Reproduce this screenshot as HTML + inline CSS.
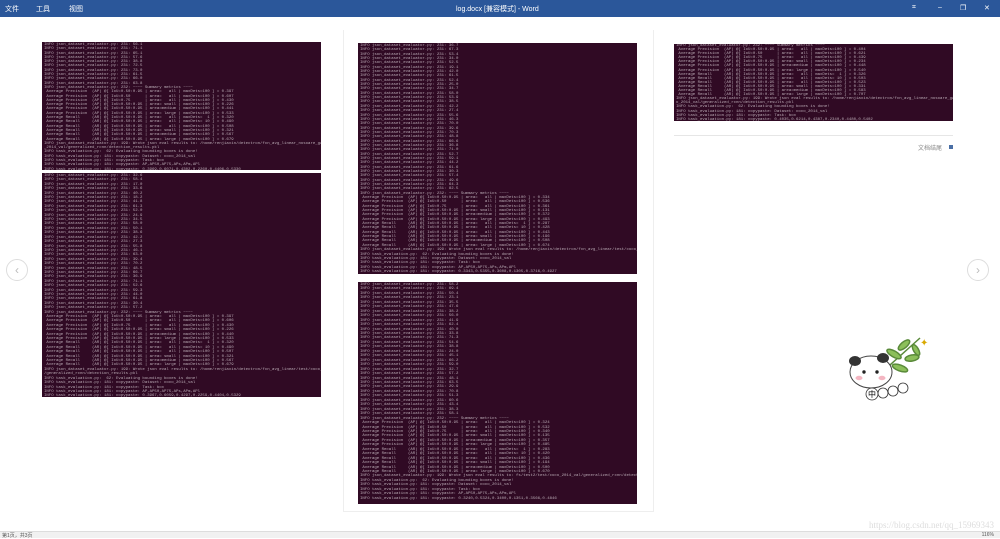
<!DOCTYPE html>
<html><head><meta charset="utf-8"><style>
*{margin:0;padding:0;box-sizing:border-box}
body{width:1000px;height:538px;background:#fff;position:relative;overflow:hidden;font-family:"Liberation Sans","Noto Sans CJK SC",sans-serif}
.tb{position:absolute;left:0;top:0;width:1000px;height:17px;background:#2b579a;color:#fff;font-size:7px}
.tb span{position:absolute;top:4px}
.term{position:absolute;background:#300a24;color:#b9aab4;font-family:"Liberation Mono",monospace;font-size:4px;line-height:4.2px;white-space:pre;overflow:hidden;padding:1px 2px}
.pg{position:absolute;border:1px solid #eee}
.circ{position:absolute;width:22px;height:22px;border:1px solid #ddd;border-radius:50%;color:#bbb;font-size:12px;text-align:center;line-height:20px}
.sb{position:absolute;left:0;top:531px;width:1000px;height:7px;background:#f1f1f1;border-top:1px solid #ddd;font-size:5px;color:#555}
</style></head><body>
<div class="tb"><span style="left:5px">文件</span><span style="left:36px">工具</span><span style="left:69px">视图</span><span style="left:456px">log.docx [兼容模式] - Word</span><span style="left:912px">⌗</span><span style="left:938px">–</span><span style="left:960px">❐</span><span style="left:984px">✕</span></div>
<div class="pg" style="left:343px;top:30px;width:311px;height:482px;border-top:none"></div>
<div class="circ" style="left:6px;top:259px">‹</div>
<div class="circ" style="left:967px;top:259px">›</div>
<div class="circ" style="left:305px;top:280px;width:12px;height:12px;line-height:10px;font-size:8px">›</div>

<div class="term" style="left:42px;top:42px;width:279px;height:128px;line-height:4.3px">INFO json_dataset_evaluator.py: 231: 56.1
INFO json_dataset_evaluator.py: 231: 71.1
INFO json_dataset_evaluator.py: 231: 65.1
INFO json_dataset_evaluator.py: 231: 57.6
INFO json_dataset_evaluator.py: 231: 38.8
INFO json_dataset_evaluator.py: 231: 72.5
INFO json_dataset_evaluator.py: 231: 73.0
INFO json_dataset_evaluator.py: 231: 61.5
INFO json_dataset_evaluator.py: 231: 66.0
INFO json_dataset_evaluator.py: 231: 63.8
INFO json_dataset_evaluator.py: 232: ~~~~ Summary metrics ~~~~
 Average Precision  (AP) @[ IoU=0.50:0.95 | area=   all | maxDets=100 ] = 0.397
 Average Precision  (AP) @[ IoU=0.50      | area=   all | maxDets=100 ] = 0.607
 Average Precision  (AP) @[ IoU=0.75      | area=   all | maxDets=100 ] = 0.430
 Average Precision  (AP) @[ IoU=0.50:0.95 | area= small | maxDets=100 ] = 0.226
 Average Precision  (AP) @[ IoU=0.50:0.95 | area=medium | maxDets=100 ] = 0.441
 Average Precision  (AP) @[ IoU=0.50:0.95 | area= large | maxDets=100 ] = 0.533
 Average Recall     (AR) @[ IoU=0.50:0.95 | area=   all | maxDets=  1 ] = 0.320
 Average Recall     (AR) @[ IoU=0.50:0.95 | area=   all | maxDets= 10 ] = 0.490
 Average Recall     (AR) @[ IoU=0.50:0.95 | area=   all | maxDets=100 ] = 0.508
 Average Recall     (AR) @[ IoU=0.50:0.95 | area= small | maxDets=100 ] = 0.321
 Average Recall     (AR) @[ IoU=0.50:0.95 | area=medium | maxDets=100 ] = 0.567
 Average Recall     (AR) @[ IoU=0.50:0.95 | area= large | maxDets=100 ] = 0.679
INFO json_dataset_evaluator.py: 199: Wrote json eval results to: /home/renjiaxin/detectron/fcn_avg_linear_nosoare_gaussian/test/coco
_2014_val/generalized_rcnn/detection_results.pkl
INFO task_evaluation.py:  62: Evaluating bounding boxes is done!
INFO task_evaluation.py: 181: copypaste: Dataset: coco_2014_val
INFO task_evaluation.py: 181: copypaste: Task: box
INFO task_evaluation.py: 181: copypaste: AP,AP50,AP75,APs,APm,APl
INFO task_evaluation.py: 181: copypaste: 0.3969,0.6071,0.4302,0.2260,0.4406,0.5330</div>

<div class="term" style="left:42px;top:173px;width:279px;height:224px;line-height:4.4px">INFO json_dataset_evaluator.py: 231: 32.6
INFO json_dataset_evaluator.py: 231: 58.4
INFO json_dataset_evaluator.py: 231: 17.0
INFO json_dataset_evaluator.py: 231: 33.6
INFO json_dataset_evaluator.py: 231: 40.2
INFO json_dataset_evaluator.py: 231: 18.2
INFO json_dataset_evaluator.py: 231: 41.8
INFO json_dataset_evaluator.py: 231: 61.3
INFO json_dataset_evaluator.py: 231: 52.0
INFO json_dataset_evaluator.py: 231: 24.9
INFO json_dataset_evaluator.py: 231: 34.5
INFO json_dataset_evaluator.py: 231: 58.0
INFO json_dataset_evaluator.py: 231: 50.1
INFO json_dataset_evaluator.py: 231: 38.6
INFO json_dataset_evaluator.py: 231: 42.2
INFO json_dataset_evaluator.py: 231: 27.3
INFO json_dataset_evaluator.py: 231: 55.8
INFO json_dataset_evaluator.py: 231: 46.1
INFO json_dataset_evaluator.py: 231: 63.0
INFO json_dataset_evaluator.py: 231: 39.4
INFO json_dataset_evaluator.py: 231: 70.2
INFO json_dataset_evaluator.py: 231: 48.5
INFO json_dataset_evaluator.py: 231: 66.7
INFO json_dataset_evaluator.py: 231: 36.9
INFO json_dataset_evaluator.py: 231: 71.1
INFO json_dataset_evaluator.py: 231: 52.6
INFO json_dataset_evaluator.py: 231: 59.3
INFO json_dataset_evaluator.py: 231: 44.0
INFO json_dataset_evaluator.py: 231: 61.8
INFO json_dataset_evaluator.py: 231: 30.4
INFO json_dataset_evaluator.py: 231: 57.2
INFO json_dataset_evaluator.py: 232: ~~~~ Summary metrics ~~~~
 Average Precision  (AP) @[ IoU=0.50:0.95 | area=   all | maxDets=100 ] = 0.397
 Average Precision  (AP) @[ IoU=0.50      | area=   all | maxDets=100 ] = 0.606
 Average Precision  (AP) @[ IoU=0.75      | area=   all | maxDets=100 ] = 0.430
 Average Precision  (AP) @[ IoU=0.50:0.95 | area= small | maxDets=100 ] = 0.226
 Average Precision  (AP) @[ IoU=0.50:0.95 | area=medium | maxDets=100 ] = 0.440
 Average Precision  (AP) @[ IoU=0.50:0.95 | area= large | maxDets=100 ] = 0.533
 Average Recall     (AR) @[ IoU=0.50:0.95 | area=   all | maxDets=  1 ] = 0.320
 Average Recall     (AR) @[ IoU=0.50:0.95 | area=   all | maxDets= 10 ] = 0.490
 Average Recall     (AR) @[ IoU=0.50:0.95 | area=   all | maxDets=100 ] = 0.507
 Average Recall     (AR) @[ IoU=0.50:0.95 | area= small | maxDets=100 ] = 0.321
 Average Recall     (AR) @[ IoU=0.50:0.95 | area=medium | maxDets=100 ] = 0.567
 Average Recall     (AR) @[ IoU=0.50:0.95 | area= large | maxDets=100 ] = 0.679
INFO json_dataset_evaluator.py: 199: Wrote json eval results to: /home/renjiaxin/detectron/fcn_avg_linear/test/coco_2014_val
/generalized_rcnn/detection_results.pkl
INFO task_evaluation.py:  62: Evaluating bounding boxes is done!
INFO task_evaluation.py: 181: copypaste: Dataset: coco_2014_val
INFO task_evaluation.py: 181: copypaste: Task: box
INFO task_evaluation.py: 181: copypaste: AP,AP50,AP75,APs,APm,APl
INFO task_evaluation.py: 181: copypaste: 0.3967,0.6059,0.4297,0.2259,0.4404,0.5329</div>

<div class="term" style="left:358px;top:43px;width:279px;height:231px;line-height:4.35px">INFO json_dataset_evaluator.py: 231: 36.7
INFO json_dataset_evaluator.py: 231: 67.3
INFO json_dataset_evaluator.py: 231: 53.4
INFO json_dataset_evaluator.py: 231: 34.0
INFO json_dataset_evaluator.py: 231: 52.5
INFO json_dataset_evaluator.py: 231: 19.1
INFO json_dataset_evaluator.py: 231: 42.0
INFO json_dataset_evaluator.py: 231: 61.5
INFO json_dataset_evaluator.py: 231: 52.4
INFO json_dataset_evaluator.py: 231: 25.0
INFO json_dataset_evaluator.py: 231: 34.7
INFO json_dataset_evaluator.py: 231: 58.0
INFO json_dataset_evaluator.py: 231: 53.9
INFO json_dataset_evaluator.py: 231: 38.5
INFO json_dataset_evaluator.py: 231: 42.2
INFO json_dataset_evaluator.py: 231: 27.4
INFO json_dataset_evaluator.py: 231: 55.6
INFO json_dataset_evaluator.py: 231: 46.3
INFO json_dataset_evaluator.py: 231: 70.0
INFO json_dataset_evaluator.py: 231: 39.6
INFO json_dataset_evaluator.py: 231: 70.3
INFO json_dataset_evaluator.py: 231: 48.8
INFO json_dataset_evaluator.py: 231: 66.6
INFO json_dataset_evaluator.py: 231: 36.8
INFO json_dataset_evaluator.py: 231: 71.0
INFO json_dataset_evaluator.py: 231: 52.7
INFO json_dataset_evaluator.py: 231: 59.1
INFO json_dataset_evaluator.py: 231: 44.2
INFO json_dataset_evaluator.py: 231: 61.6
INFO json_dataset_evaluator.py: 231: 30.3
INFO json_dataset_evaluator.py: 231: 57.4
INFO json_dataset_evaluator.py: 231: 49.6
INFO json_dataset_evaluator.py: 231: 64.3
INFO json_dataset_evaluator.py: 231: 82.5
INFO json_dataset_evaluator.py: 232: ~~~~ Summary metrics ~~~~
 Average Precision  (AP) @[ IoU=0.50:0.95 | area=   all | maxDets=100 ] = 0.334
 Average Precision  (AP) @[ IoU=0.50      | area=   all | maxDets=100 ] = 0.536
 Average Precision  (AP) @[ IoU=0.75      | area=   all | maxDets=100 ] = 0.361
 Average Precision  (AP) @[ IoU=0.50:0.95 | area= small | maxDets=100 ] = 0.131
 Average Precision  (AP) @[ IoU=0.50:0.95 | area=medium | maxDets=100 ] = 0.372
 Average Precision  (AP) @[ IoU=0.50:0.95 | area= large | maxDets=100 ] = 0.493
 Average Recall     (AR) @[ IoU=0.50:0.95 | area=   all | maxDets=  1 ] = 0.287
 Average Recall     (AR) @[ IoU=0.50:0.95 | area=   all | maxDets= 10 ] = 0.428
 Average Recall     (AR) @[ IoU=0.50:0.95 | area=   all | maxDets=100 ] = 0.443
 Average Recall     (AR) @[ IoU=0.50:0.95 | area= small | maxDets=100 ] = 0.196
 Average Recall     (AR) @[ IoU=0.50:0.95 | area=medium | maxDets=100 ] = 0.508
 Average Recall     (AR) @[ IoU=0.50:0.95 | area= large | maxDets=100 ] = 0.674
INFO json_dataset_evaluator.py: 199: Wrote json eval results to: /home/renjiaxin/detectron/fcn_avg_linear/test/coco_2014_val/genera
INFO task_evaluation.py:  62: Evaluating bounding boxes is done!
INFO task_evaluation.py: 181: copypaste: Dataset: coco_2014_val
INFO task_evaluation.py: 181: copypaste: Task: box
INFO task_evaluation.py: 181: copypaste: AP,AP50,AP75,APs,APm,APl
INFO task_evaluation.py: 181: copypaste: 0.3343,0.5355,0.3608,0.1305,0.3716,0.4927</div>

<div class="term" style="left:358px;top:282px;width:279px;height:222px;line-height:4.45px">INFO json_dataset_evaluator.py: 231: 58.2
INFO json_dataset_evaluator.py: 231: 69.4
INFO json_dataset_evaluator.py: 231: 50.4
INFO json_dataset_evaluator.py: 231: 23.1
INFO json_dataset_evaluator.py: 231: 35.5
INFO json_dataset_evaluator.py: 231: 47.6
INFO json_dataset_evaluator.py: 231: 38.2
INFO json_dataset_evaluator.py: 231: 56.0
INFO json_dataset_evaluator.py: 231: 41.9
INFO json_dataset_evaluator.py: 231: 62.4
INFO json_dataset_evaluator.py: 231: 40.0
INFO json_dataset_evaluator.py: 231: 33.8
INFO json_dataset_evaluator.py: 231: 71.3
INFO json_dataset_evaluator.py: 231: 54.6
INFO json_dataset_evaluator.py: 231: 38.8
INFO json_dataset_evaluator.py: 231: 24.0
INFO json_dataset_evaluator.py: 231: 45.1
INFO json_dataset_evaluator.py: 231: 66.2
INFO json_dataset_evaluator.py: 231: 59.0
INFO json_dataset_evaluator.py: 231: 32.7
INFO json_dataset_evaluator.py: 231: 57.2
INFO json_dataset_evaluator.py: 231: 48.1
INFO json_dataset_evaluator.py: 231: 63.5
INFO json_dataset_evaluator.py: 231: 29.9
INFO json_dataset_evaluator.py: 231: 70.8
INFO json_dataset_evaluator.py: 231: 51.3
INFO json_dataset_evaluator.py: 231: 60.6
INFO json_dataset_evaluator.py: 231: 43.4
INFO json_dataset_evaluator.py: 231: 38.3
INFO json_dataset_evaluator.py: 231: 58.1
INFO json_dataset_evaluator.py: 232: ~~~~ Summary metrics ~~~~
 Average Precision  (AP) @[ IoU=0.50:0.95 | area=   all | maxDets=100 ] = 0.324
 Average Precision  (AP) @[ IoU=0.50      | area=   all | maxDets=100 ] = 0.532
 Average Precision  (AP) @[ IoU=0.75      | area=   all | maxDets=100 ] = 0.340
 Average Precision  (AP) @[ IoU=0.50:0.95 | area= small | maxDets=100 ] = 0.135
 Average Precision  (AP) @[ IoU=0.50:0.95 | area=medium | maxDets=100 ] = 0.357
 Average Precision  (AP) @[ IoU=0.50:0.95 | area= large | maxDets=100 ] = 0.485
 Average Recall     (AR) @[ IoU=0.50:0.95 | area=   all | maxDets=  1 ] = 0.283
 Average Recall     (AR) @[ IoU=0.50:0.95 | area=   all | maxDets= 10 ] = 0.420
 Average Recall     (AR) @[ IoU=0.50:0.95 | area=   all | maxDets=100 ] = 0.436
 Average Recall     (AR) @[ IoU=0.50:0.95 | area= small | maxDets=100 ] = 0.194
 Average Recall     (AR) @[ IoU=0.50:0.95 | area=medium | maxDets=100 ] = 0.500
 Average Recall     (AR) @[ IoU=0.50:0.95 | area= large | maxDets=100 ] = 0.670
INFO json_dataset_evaluator.py: 199: Wrote json eval results to: fs/test2/test/coco_2014_val/generalized_rcnn/detection_results.pkl
INFO task_evaluation.py:  62: Evaluating bounding boxes is done!
INFO task_evaluation.py: 181: copypaste: Dataset: coco_2014_val
INFO task_evaluation.py: 181: copypaste: Task: box
INFO task_evaluation.py: 181: copypaste: AP,AP50,AP75,APs,APm,APl
INFO task_evaluation.py: 181: copypaste: 0.3240,0.5324,0.3400,0.1351,0.3566,0.4846</div>

<div class="term" style="left:674px;top:44px;width:279px;height:77px;padding-top:0;line-height:4.1px">INFO json_dataset_evaluator.py: 232: ~~~~ Summary metrics ~~~~
 Average Precision  (AP) @[ IoU=0.50:0.95 | area=   all | maxDets=100 ] = 0.404
 Average Precision  (AP) @[ IoU=0.50      | area=   all | maxDets=100 ] = 0.621
 Average Precision  (AP) @[ IoU=0.75      | area=   all | maxDets=100 ] = 0.439
 Average Precision  (AP) @[ IoU=0.50:0.95 | area= small | maxDets=100 ] = 0.234
 Average Precision  (AP) @[ IoU=0.50:0.95 | area=medium | maxDets=100 ] = 0.448
 Average Precision  (AP) @[ IoU=0.50:0.95 | area= large | maxDets=100 ] = 0.540
 Average Recall     (AR) @[ IoU=0.50:0.95 | area=   all | maxDets=  1 ] = 0.326
 Average Recall     (AR) @[ IoU=0.50:0.95 | area=   all | maxDets= 10 ] = 0.503
 Average Recall     (AR) @[ IoU=0.50:0.95 | area=   all | maxDets=100 ] = 0.523
 Average Recall     (AR) @[ IoU=0.50:0.95 | area= small | maxDets=100 ] = 0.331
 Average Recall     (AR) @[ IoU=0.50:0.95 | area=medium | maxDets=100 ] = 0.583
 Average Recall     (AR) @[ IoU=0.50:0.95 | area= large | maxDets=100 ] = 0.707
INFO json_dataset_evaluator.py: 199: Wrote json eval results to: /home/renjiaxin/detectron/fcn_avg_linear_nosoare_gaussian/test/coc
o_2014_val/generalized_rcnn/detection_results.pkl
INFO task_evaluation.py:  62: Evaluating bounding boxes is done!
INFO task_evaluation.py: 181: copypaste: Dataset: coco_2014_val
INFO task_evaluation.py: 181: copypaste: Task: box
INFO task_evaluation.py: 181: copypaste: 0.4035,0.6214,0.4387,0.2340,0.4480,0.5402</div>
<div style="position:absolute;left:674px;top:135px;width:279px;height:1px;background:#e6e6e6"></div>
<div style="position:absolute;left:918px;top:143px;font-size:6px;color:#888">文档结尾</div>
<div style="position:absolute;left:949px;top:145px;width:4px;height:4px;background:#4a6fa5"></div>

<svg style="position:absolute;left:846px;top:332px" width="90" height="72" viewBox="0 0 90 72">
<g stroke="#5a8a3a" stroke-width="1.5" fill="#8cbf5a"><path d="M34 42 L74 6" fill="none"/><ellipse cx="58" cy="13" rx="7" ry="3" transform="rotate(-40 58 13)"/><ellipse cx="48" cy="22" rx="8" ry="3" transform="rotate(30 48 22)"/><ellipse cx="66" cy="26" rx="7" ry="3" transform="rotate(-10 66 26)"/><ellipse cx="54" cy="36" rx="8" ry="3" transform="rotate(20 54 36)"/><ellipse cx="70" cy="18" rx="6" ry="2.5" transform="rotate(60 70 18)"/></g>
<ellipse cx="25" cy="40" rx="21" ry="16" fill="#fff" stroke="#444" stroke-width="1"/>
<ellipse cx="9" cy="29" rx="6" ry="5" fill="#333"/><ellipse cx="37" cy="26" rx="6" ry="5" fill="#333"/>
<circle cx="18" cy="40" r="1.7" fill="#222"/><circle cx="31" cy="40" r="1.7" fill="#222"/>
<ellipse cx="13" cy="46" rx="3.5" ry="2.2" fill="#f4b6c2"/><ellipse cx="36" cy="46" rx="3.5" ry="2.2" fill="#f4b6c2"/>
<g fill="#fff" stroke="#333" stroke-width="0.8"><circle cx="26" cy="62" r="6"/><circle cx="37" cy="61" r="5"/><circle cx="47" cy="59" r="5"/><circle cx="57" cy="56" r="5"/></g>
<text x="22" y="65" font-size="8" font-family="Noto Sans CJK SC">中</text>
<text x="74" y="14" font-size="10" fill="#d9a900">✦</text>
</svg>

<div class="sb"><span style="position:absolute;left:2px;top:0">第1页，共3页</span><span style="position:absolute;right:6px;top:0">116%</span></div>
<div style="position:absolute;right:6px;top:520px;font-size:9px;color:#ddd;font-family:'Liberation Serif',serif">https://blog.csdn.net/qq_15969343</div>
</body></html>
